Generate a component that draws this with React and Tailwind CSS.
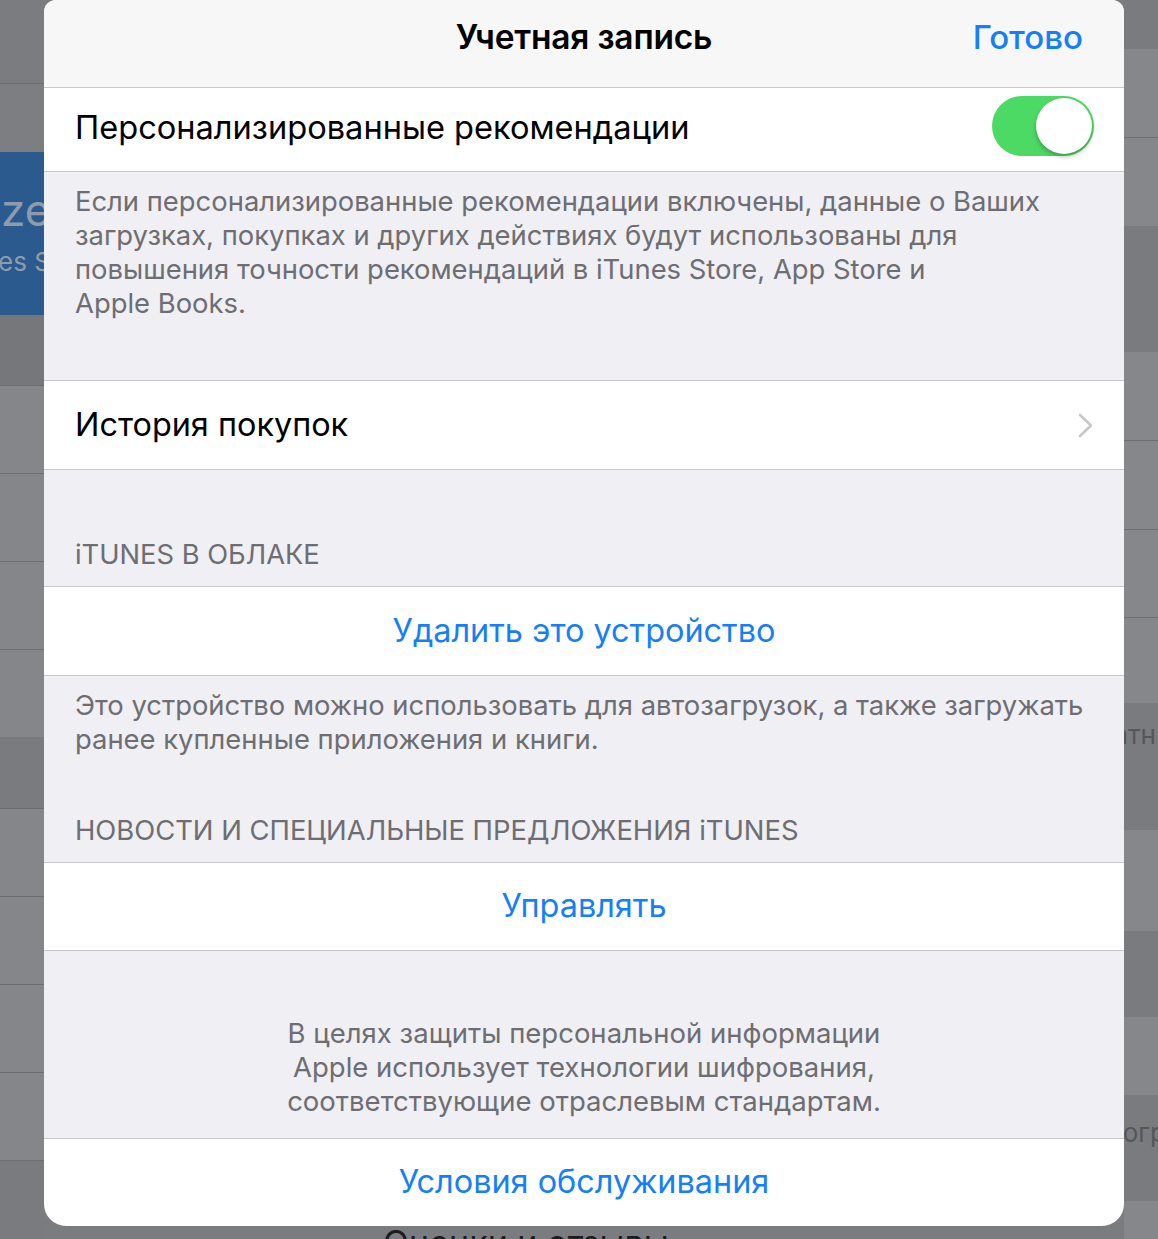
import React from 'react';

const leftBands = [
  { cls: 'h-[84px] bg-[#7b7c80] border-b border-[#6c6d71]' },
  { cls: 'h-[68px] bg-[#7d7e82]' },
  { cls: 'h-[163px] bg-[#2b5a8e]', blue: true },
  { cls: 'h-[71px] bg-[#76777b] border-b border-[#6c6d71]' },
  { cls: 'h-[88px] bg-[#85868a] border-b border-[#6c6d71]' },
  { cls: 'h-[88px] bg-[#85868a] border-b border-[#6c6d71]' },
  { cls: 'h-[88px] bg-[#85868a] border-b border-[#6c6d71]' },
  { cls: 'h-[87px] bg-[#85868a]' },
  { cls: 'h-[72px] bg-[#7a7b7f] border-b border-[#6c6d71]' },
  { cls: 'h-[88px] bg-[#85868a] border-b border-[#6c6d71]' },
  { cls: 'h-[88px] bg-[#85868a] border-b border-[#6c6d71]' },
  { cls: 'h-[88px] bg-[#85868a] border-b border-[#6c6d71]' },
  { cls: 'h-[88px] bg-[#85868a] border-b border-[#6c6d71]' },
  { cls: 'flex-1 bg-[#7a7b7f]' },
];

const rightBands = [
  { cls: 'h-[49px] bg-[#7a7b7f]' },
  { cls: 'h-[89px] bg-[#86878b] border-b border-[#6c6d71]' },
  { cls: 'h-[88px] bg-[#86878b]' },
  { cls: 'h-[126px] bg-[#7a7b7f]' },
  { cls: 'h-[89px] bg-[#86878b] border-b border-[#6c6d71]' },
  { cls: 'h-[89px] bg-[#86878b] border-b border-[#6c6d71]' },
  { cls: 'h-[88px] bg-[#86878b] border-b border-[#6c6d71]' },
  { cls: 'h-[85px] bg-[#86878b]' },
  { cls: 'h-[127px] bg-[#7a7b7f]', text: 'атн', pad: 'pt-[16px] pr-[2px]' },
  { cls: 'h-[101px] bg-[#86878b]' },
  { cls: 'h-[86px] bg-[#7a7b7f]' },
  { cls: 'h-[78px] bg-[#86878b]' },
  { cls: 'h-[106px] bg-[#7a7b7f]', text: 'огр', pad: 'pt-[22px] -mr-[8px]' },
  { cls: 'flex-1 bg-[#86878b]' },
];

const Line = () => <div className="h-px bg-[#c8c7cc] shrink-0" />;

const Chevron = () => (
  <svg width="15" height="25" viewBox="0 0 15 25" fill="none">
    <path d="M2 2 L13 12.5 L2 23" stroke="#c7c7cc" strokeWidth="2.6" strokeLinecap="round" strokeLinejoin="round" />
  </svg>
);

const Toggle = () => (
  <div className="w-[102px] h-[60px] rounded-full bg-[#4cd964] p-[2px] flex justify-end shrink-0">
    <div className="w-[56px] h-[56px] rounded-full bg-white shadow-[0_3px_4px_rgba(0,0,0,0.25)]" />
  </div>
);

export default function App() {
  return (
    <div className="w-[1158px] h-[1239px] flex overflow-hidden bg-[#7b7c80] font-['Inter','Noto_Sans',sans-serif] antialiased">
      {/* фон слева */}
      <div className="w-[44px] shrink-0 flex flex-col overflow-hidden">
        {leftBands.map((b, i) => (
          <div key={i} className={`${b.cls} shrink-0 overflow-hidden`}>
            {b.blue && (
              <div className="flex flex-col pt-[34px]">
                <div className="text-[44px] leading-[48px] text-[#8d9bad] whitespace-nowrap pl-[1px]">ze</div>
                <div className="text-[26px] leading-[32px] text-[#8d9bad] whitespace-nowrap -ml-[2px] mt-[12px]">es Store</div>
              </div>
            )}
          </div>
        ))}
      </div>

      {/* лист */}
      <div className="w-[1080px] shrink-0 flex flex-col">
        <div className="bg-white rounded-t-[12px] rounded-b-[22px] overflow-hidden flex flex-col">
          <div className="h-[87px] bg-[#f7f7f8] grid grid-cols-[1fr_auto_1fr] items-center pb-[12px]">
            <div />
            <div className="text-[33.5px] font-semibold text-black tracking-[-0.2px]">Учетная запись</div>
            <div className="flex justify-end pr-[41px]">
              <span className="text-[33px] font-medium text-[#157efb]">Готово</span>
            </div>
          </div>
          <Line />
          <div className="h-[83px] flex items-start justify-between pl-[31px] pr-[30px]">
            <span className="text-[32.6px] text-black mt-[15px]">Персонализированные рекомендации</span>
            <div className="mt-[8px]"><Toggle /></div>
          </div>
          <Line />
          <div className="h-[208px] bg-[#efeff4] pt-[12px] px-[31px] text-[27.4px] leading-[34px] text-[#6d6d72]">
            Если персонализированные рекомендации включены, данные о Ваших<br />
            загрузках, покупках и других действиях будут использованы для<br />
            повышения точности рекомендаций в iTunes Store, App Store и<br />
            Apple Books.
          </div>
          <Line />
          <div className="h-[88px] flex items-center justify-between pl-[31px] pr-[31px]">
            <span className="text-[32.4px] text-black">История покупок</span>
            <Chevron />
          </div>
          <Line />
          <div className="h-[116px] bg-[#efeff4] flex flex-col justify-end pb-[14px] px-[31px] text-[27.3px] leading-[34px] text-[#6d6d72]">
            iTUNES В ОБЛАКЕ
          </div>
          <Line />
          <div className="h-[88px] flex items-center justify-center text-[32.4px] text-[#157efb]">
            Удалить это устройство
          </div>
          <Line />
          <div className="h-[186px] bg-[#efeff4] flex flex-col pt-[12px] pb-[15px] px-[31px] text-[27.4px] leading-[34px] text-[#6d6d72]">
            <p>
              Это устройство можно использовать для автозагрузок, а также загружать<br />
              ранее купленные приложения и книги.
            </p>
            <p className="mt-auto">НОВОСТИ И СПЕЦИАЛЬНЫЕ ПРЕДЛОЖЕНИЯ iTUNES</p>
          </div>
          <Line />
          <div className="h-[87px] flex items-center justify-center text-[32.4px] text-[#157efb]">
            Управлять
          </div>
          <Line />
          <div className="h-[187px] bg-[#efeff4] pt-[65px] text-center text-[27.5px] leading-[34px] text-[#6d6d72]">
            В целях защиты персональной информации<br />
            Apple использует технологии шифрования,<br />
            соответствующие отраслевым стандартам.
          </div>
          <Line />
          <div className="h-[87px] flex items-center justify-center text-[32.4px] text-[#157efb]">
            Условия обслуживания
          </div>
        </div>
        <div className="flex-1 overflow-hidden pl-[339px]">
          <div className="text-[34px] leading-none text-[#1c1c1e] whitespace-nowrap">Оценки и отзывы</div>
        </div>
      </div>

      {/* фон справа */}
      <div className="flex-1 flex flex-col overflow-hidden">
        {rightBands.map((b, i) => (
          <div key={i} className={`${b.cls} shrink-0 overflow-hidden`}>
            {b.text && (
              <div className={`flex justify-end ${b.pad}`}>
                <span className="text-[26px] leading-[32px] text-[#55565a] whitespace-nowrap">{b.text}</span>
              </div>
            )}
          </div>
        ))}
      </div>
    </div>
  );
}
